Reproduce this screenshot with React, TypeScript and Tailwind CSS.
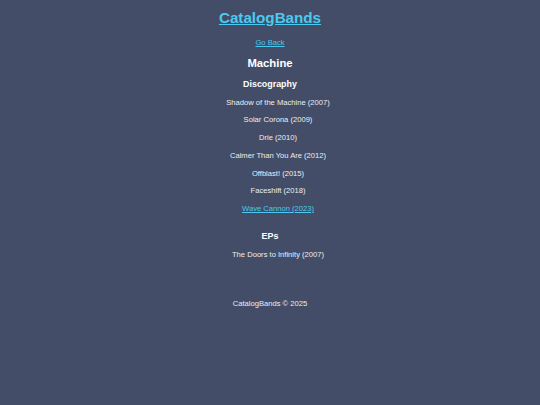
export default function App() {
  const albums = [
    "Shadow of the Machine (2007)",
    "Solar Corona (2009)",
    "Drie (2010)",
    "Calmer Than You Are (2012)",
    "Offblast! (2015)",
    "Faceshift (2018)",
  ];

  return (
    <div className="min-h-[405px] w-full bg-[#434d67] font-['Liberation_Sans',Arial,sans-serif] text-[#eceef3]">
      <div className="flex flex-col items-center pt-[8px]">
        <h1 className="text-[15.2px] font-bold leading-[20px]">
          <a href="#" className="text-[#4cc9f0] underline">CatalogBands</a>
        </h1>
        <a href="#" className="mt-[9.5px] text-[7.6px] leading-[10px] text-[#4cc9f0] underline">Go Back</a>
        <h2 className="mt-[8.5px] text-[11.3px] font-bold leading-[14px] text-white">Machine</h2>
        <h3 className="mt-[8px] text-[8.9px] font-bold leading-[12px] text-white">Discography</h3>
        <ul className="mt-[3.5px] flex flex-col items-center pl-[16px] text-[7.6px]">
          {albums.map((a) => (
            <li key={a} className="leading-[17.75px]">{a}</li>
          ))}
          <li className="leading-[17.75px]">
            <a href="#" className="text-[#4cc9f0] underline">Wave Cannon (2023)</a>
          </li>
        </ul>
        <h3 className="mt-[12.3px] text-[8.9px] font-bold leading-[12px] text-white">EPs</h3>
        <ul className="mt-[3.5px] flex flex-col items-center pl-[16px] text-[7.6px]">
          <li className="leading-[17.75px]">The Doors to Infinity (2007)</li>
        </ul>
        <footer className="mt-[36px] text-[7.6px] leading-[10px]">CatalogBands © 2025</footer>
      </div>
    </div>
  );
}
